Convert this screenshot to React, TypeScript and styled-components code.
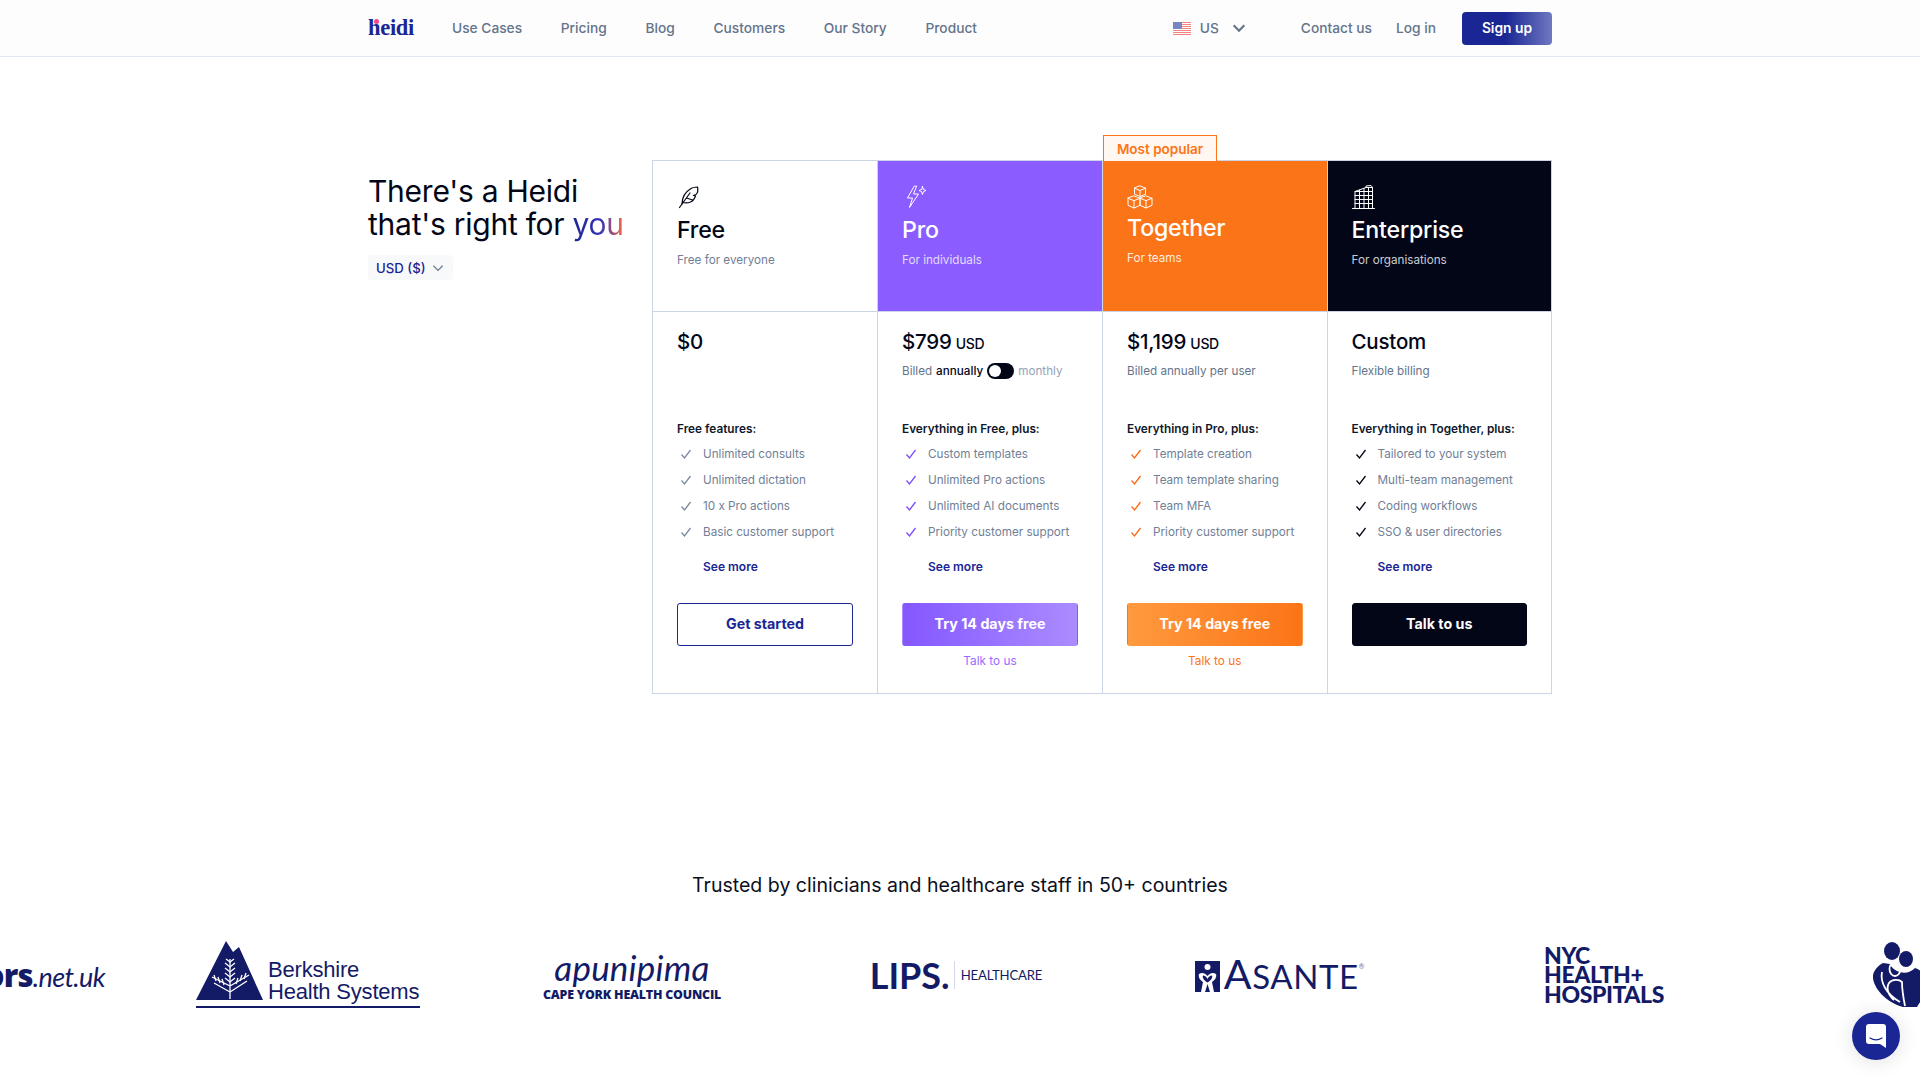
import React from "react";
import styled, { createGlobalStyle } from "styled-components";

const NAVY = "#1a2694";
const LOGO = "#141b66";

const Global = createGlobalStyle`
  html, body { margin: 0; padding: 0; background: #fff; overflow-x: hidden; }
  body { font-family: Inter, "Liberation Sans", sans-serif; color: #020617; }
  * { box-sizing: border-box; }
`;

const TopBar = styled.header`
  height: 57px;
  background: #fdfdfe;
  border-bottom: 1px solid #e2e8f0;
`;
const BarInner = styled.div`
  width: 1184px;
  height: 56px;
  margin: 0 auto;
  display: flex;
  align-items: center;
`;
const Brand = styled.div`
  position: relative;
  width: 44px;
  font: 700 22.5px/24px "Liberation Serif", serif;
  color: ${NAVY};
  letter-spacing: -0.3px;
  margin-right: 40px;
`;
const BrandDot = styled.span`
  position: absolute;
  left: 6px;
  top: 3px;
  width: 5px;
  height: 5px;
  border-radius: 50%;
  background: #f6478f;
`;
const NavLinks = styled.nav`
  display: flex;
  gap: 38.7px;
`;
const NavLink = styled.a`
  font-size: 13.75px;
  font-weight: 500;
  color: #64748b;
  white-space: nowrap;
`;
const Region = styled.div`
  margin-left: auto;
  display: flex;
  align-items: center;
  font-size: 13.75px;
  font-weight: 500;
  color: #64748b;
`;
const RegionText = styled.span`
  margin: 0 12px 0 9px;
`;
const RightLinks = styled.div`
  display: flex;
  align-items: center;
  gap: 24px;
  margin-left: 54px;
`;
const SignUp = styled.button`
  width: 90px;
  height: 33px;
  margin-left: 2px;
  border: 0;
  border-radius: 4px;
  background: linear-gradient(90deg, ${NAVY} 48%, #6e78c2 100%);
  color: #fff;
  font: 600 13.8px Inter, sans-serif;
`;

const Pricing = styled.section`
  width: 1184px;
  margin: 103px auto 0;
  display: flex;
`;
const Intro = styled.div`
  width: 284px;
  padding-top: 15px;
`;
const Headline = styled.h1`
  margin: 0;
  font-size: 30px;
  line-height: 33px;
  font-weight: 400;
  letter-spacing: -0.25px;
`;
const Shine = styled.span`
  background: linear-gradient(90deg, ${NAVY} 0%, #3a35b5 55%, #ff6a3d 100%);
  -webkit-background-clip: text;
  background-clip: text;
  color: transparent;
`;
const Currency = styled.div`
  display: inline-flex;
  align-items: center;
  gap: 5px;
  height: 25px;
  margin-top: 14px;
  padding: 0 8px;
  border-radius: 4px;
  background: #f8f9fb;
  font-size: 13.2px;
  font-weight: 500;
  color: ${NAVY};
`;
const Table = styled.div`
  width: 900px;
  display: grid;
  grid-template-columns: 225px 225px 224.5px 225.5px;
`;
const Plan = styled.article<{ $last?: boolean }>`
  position: relative;
  height: 534px;
  display: flex;
  flex-direction: column;
  border-left: 1px solid #cbd5e6;
  border-right: ${(p) => (p.$last ? "1px solid #cbd5e6" : "0")};
  border-bottom: 1px solid #cbd5e6;
`;
const Popular = styled.div`
  position: absolute;
  left: 0;
  top: -25px;
  width: 114px;
  height: 26px;
  display: flex;
  align-items: center;
  justify-content: center;
  border: 1px solid #fb7417;
  border-bottom: 0;
  background: #fff7f0;
  font-size: 13.5px;
  font-weight: 600;
  color: #fb7417;
`;
const PlanHead = styled.div<{ $bg: string; $fg: string }>`
  height: 152px;
  padding: 24px 24px 0;
  background: ${(p) => p.$bg};
  color: ${(p) => p.$fg};
  border-top: 1px solid #cbd5e6;
  border-bottom: 1px solid #cbd5e6;
`;
const PlanIcon = styled.svg`
  display: block;
  height: 24px;
  width: 26px;
  fill: none;
  stroke: currentColor;
  stroke-width: 1;
  stroke-linejoin: round;
  stroke-linecap: round;
`;
const PlanName = styled.h2<{ $tight?: boolean }>`
  margin: ${(p) => (p.$tight ? "5px" : "7px")} 0 0;
  font-size: 23.2px;
  line-height: 28px;
  font-weight: 500;
  letter-spacing: -0.2px;
`;
const PlanSub = styled.p<{ $tone: string }>`
  margin: 8px 0 0;
  font-size: 11.7px;
  line-height: 16px;
  color: ${(p) => p.$tone};
`;
const PlanBody = styled.div`
  flex: 1;
  padding: 18px 24px 0;
`;
const PriceBlock = styled.div`
  height: 91px;
`;
const Price = styled.div`
  height: 24px;
  font-size: 20.5px;
  line-height: 24px;
  font-weight: 500;
  letter-spacing: -0.2px;
`;
const PriceUnit = styled.span`
  margin-left: 4px;
  font-size: 14px;
  line-height: 1;
  letter-spacing: -0.3px;
`;
const Billing = styled.div`
  display: flex;
  align-items: center;
  height: 16px;
  margin-top: 9px;
  font-size: 11.7px;
  line-height: 16px;
  color: #64748b;
  white-space: nowrap;
`;
const Strong = styled.span`
  margin-left: 4px;
  font-weight: 500;
  color: #020617;
`;
const Muted = styled.span`
  margin-left: 4px;
  color: #94a3b8;
`;
const Toggle = styled.span`
  position: relative;
  display: inline-block;
  width: 27px;
  height: 16px;
  margin-left: 4px;
  border-radius: 8px;
  background: #020617;
`;
const Knob = styled.span`
  position: absolute;
  left: 2px;
  top: 2px;
  width: 12px;
  height: 12px;
  border-radius: 50%;
  background: #fff;
`;
const FeatureTitle = styled.div`
  height: 16px;
  font-size: 11.8px;
  line-height: 16px;
  font-weight: 600;
  color: #0f172a;
  white-space: nowrap;
`;
const FeatureList = styled.ul`
  list-style: none;
  margin: 4px 0 0;
  padding: 0;
`;
const Feature = styled.li`
  display: flex;
  align-items: center;
  height: 26px;
  padding-left: 3px;
  font-size: 11.7px;
  color: #718096;
  white-space: nowrap;
`;
const Check = styled.svg<{ $color: string }>`
  flex: none;
  width: 12px;
  height: 12px;
  margin-right: 11px;
  fill: none;
  stroke: ${(p) => p.$color};
  stroke-width: 1.3;
`;
const SeeMore = styled.a`
  display: block;
  height: 16px;
  margin: 14px 0 0 26px;
  font-size: 12px;
  line-height: 16px;
  font-weight: 600;
  color: ${NAVY};
`;
const Cta = styled.button<{ $bg: string; $fg: string; $line: string }>`
  display: block;
  width: 100%;
  height: 43px;
  margin-top: 28px;
  padding: 0 0 2px;
  border: 1px solid ${(p) => p.$line};
  border-radius: 3px;
  background: ${(p) => p.$bg};
  color: ${(p) => p.$fg};
  font: 700 14.25px Inter, sans-serif;
`;
const TalkLink = styled.a<{ $color: string }>`
  display: block;
  margin-top: 7px;
  font-size: 11.8px;
  line-height: 16px;
  text-align: center;
  color: ${(p) => p.$color};
`;

const Trusted = styled.h3`
  margin: 177px 0 0;
  font-size: 19.55px;
  line-height: 28px;
  font-weight: 400;
  text-align: center;
  color: #0b1020;
`;
const Marquee = styled.div`
  margin-top: 16px;
  overflow: hidden;
`;
const Track = styled.div`
  display: flex;
  margin-left: -178px;
  width: 2400px;
`;
const LogoCell = styled.div`
  flex: 0 0 324px;
  height: 120px;
  display: flex;
  align-items: center;
  justify-content: center;
  color: ${LOGO};
`;
const DoctorsCell = styled(LogoCell)`
  justify-content: flex-end;
  padding-right: 41px;
`;
const DoctorsMark = styled.div`
  font: 800 31px/1 "Open Sans", sans-serif;
  letter-spacing: -0.8px;
  white-space: nowrap;
`;
const DoctorsThin = styled.span`
  font: italic 400 27px/1 Lato, sans-serif;
  letter-spacing: -0.6px;
`;
const Berkshire = styled.div`
  width: 224px;
  padding-bottom: 5px;
  border-bottom: 2px solid ${LOGO};
  display: flex;
  align-items: flex-end;
  gap: 5px;
  transform: translateY(-1px);
`;
const BerkshireText = styled.div`
  margin-bottom: -2px;
  font: 400 22px/22px "Liberation Sans", sans-serif;
  white-space: nowrap;
  letter-spacing: -0.2px;
`;
const Apunipima = styled.div`
  text-align: center;
`;
const ApuScript = styled.div`
  padding-bottom: 3px;
  font: italic 400 35px/36px Lato, sans-serif;
  letter-spacing: 0.2px;
`;
const ApuSub = styled.div`
  font: 800 12.4px/14px "Open Sans", sans-serif;
  white-space: nowrap;
  letter-spacing: -0.2px;
`;
const Lips = styled.div`
  display: flex;
  align-items: center;
`;
const LipsWord = styled.span`
  font: 700 36px/1 Lato, sans-serif;
`;
const LipsSide = styled.span`
  margin-left: 4px;
  padding-left: 6px;
  border-left: 1px solid #d5d8e8;
  font: 400 13.2px/28px Lato, sans-serif;
  letter-spacing: -0.2px;
`;
const Asante = styled.div`
  display: flex;
  align-items: flex-end;
  gap: 4px;
`;
const AsanteWord = styled.span`
  font: 400 41px/32px Lato, sans-serif;
  letter-spacing: 0.6px;
`;
const AsanteSmall = styled.span`
  font-size: 33px;
`;
const Registered = styled.sup`
  font-size: 7px;
  vertical-align: 20px;
  line-height: 0;
  opacity: 0.7;
`;
const Nyc = styled.div`
  font: 900 23px/19.5px Lato, sans-serif;
  letter-spacing: -0.4px;
  white-space: nowrap;
`;
const Chat = styled.div`
  position: fixed;
  right: 20px;
  bottom: 20px;
  width: 48px;
  height: 48px;
  border-radius: 50%;
  background: ${NAVY};
  display: flex;
  align-items: center;
  justify-content: center;
  box-shadow: 0 2px 20px rgba(0, 0, 0, 0.12);
`;

const Chevron = ({ size, color, w = 1.5 }: { size: number; color: string; w?: number }) => (
  <svg width={size} height={size} viewBox="0 0 12 12" fill="none" stroke={color} strokeWidth={w}>
    <path d="M2 4l4 4 4-4" />
  </svg>
);

const Flag = () => (
  <svg width="18" height="13" viewBox="0 0 18 13" opacity="0.62">
    <rect width="18" height="13" fill="#fff" />
    {[0, 2, 4, 6, 8, 10, 12].map((y) => (
      <rect key={y} y={y} width="18" height="1" fill="#ee3b3b" />
    ))}
    <rect width="9" height="7" fill="#2a3f9e" />
  </svg>
);

const FeatherIcon = () => (
  <PlanIcon viewBox="0 0 26 24" style={{ strokeWidth: 1.2 }}>
    <path d="M5 19C5 13 6.500 8 14 3.500c2-1.200 4-1.500 6.500-1.500.7 3 .2 6-1.500 7.500L16.500 10.500l2 .5c-1 3-2.500 5-5 6s-5.500 1-7.500.5" />
    <path d="M2.500 22.500L13 8M9.500 13l6 2" />
  </PlanIcon>
);
const BoltIcon = () => (
  <PlanIcon viewBox="0 0 26 24">
    <path d="M12 1.500L5.500 13h5l-3 9.500L16.500 9h-5l3-7.500z" />
    <path d="M20.500 1.500l1 3 2.500 1-2.500 1-1 3-1-3-2.500-1 2.500-1z" />
  </PlanIcon>
);
const BlocksIcon = () => (
  <PlanIcon viewBox="0 0 26 24">
    <path d="M13 1l5.500 2.200v6L13 11.500 7.500 9.200v-6zM7.500 3.200L13 5.500l5.500-2.300M13 5.500v6" />
    <path d="M7 11l6 2.300v7L7 23l-6-2.700v-7zM1 13.300L7 15.600l6-2.300M7 15.600V23" />
    <path d="M19 11l6 2.300v7L19 23l-6-2.700v-7zM13 13.300l6 2.300 6-2.300M19 15.600V23" />
  </PlanIcon>
);
const TowerIcon = () => (
  <PlanIcon viewBox="0 0 26 24">
    <path d="M3 23V6.500L14 2.500h6.500V23M0.500 23.500h22" />
    <path d="M3 10.500h17.500M3 14.500h17.500M3 18.500h17.500M3 6.500h17.500M7.500 5v18M12 3.500V23M16.500 2.500v20.500M14 2.500V1l5-.5 1.500 2" />
  </PlanIcon>
);

const TickIcon = ({ color }: { color: string }) => (
  <Check $color={color} viewBox="0 0 12 12">
    <path d="M1.500 6.500L4.500 10 10.500 2" />
  </Check>
);

const plans = [
  {
    name: "Free", sub: "Free for everyone", icon: <FeatherIcon />, bg: "#fff", fg: "#020617", tone: "#718096",
    price: "$0", title: "Free features:", check: "#7c8aa0",
    items: ["Unlimited consults", "Unlimited dictation", "10 x Pro actions", "Basic customer support"],
    cta: "Get started", ctaBg: "#fff", ctaFg: NAVY, ctaLine: NAVY,
  },
  {
    name: "Pro", sub: "For individuals", icon: <BoltIcon />, bg: "#8b5cff", fg: "#fff", tone: "rgba(255,255,255,.78)",
    price: "$799", unit: "USD", title: "Everything in Free, plus:", check: "#7c4dff", toggle: true,
    items: ["Custom templates", "Unlimited Pro actions", "Unlimited AI documents", "Priority customer support"],
    cta: "Try 14 days free", ctaBg: "linear-gradient(90deg,#8457ff,#ab8cff)", ctaFg: "#fff", ctaLine: "transparent", talk: "#9a6bff",
  },
  {
    name: "Together", sub: "For teams", icon: <BlocksIcon />, bg: "#fb7417", fg: "#fff", tone: "rgba(255,255,255,.88)", tight: true,
    price: "$1,199", unit: "USD", billing: "Billed annually per user", title: "Everything in Pro, plus:", check: "#fb6a17", popular: true,
    items: ["Template creation", "Team template sharing", "Team MFA", "Priority customer support"],
    cta: "Try 14 days free", ctaBg: "linear-gradient(90deg,#ff9a3e,#fb7417)", ctaFg: "#fff", ctaLine: "transparent", talk: "#fb7417",
  },
  {
    name: "Enterprise", sub: "For organisations", icon: <TowerIcon />, bg: "#030617", fg: "#fff", tone: "rgba(255,255,255,.8)",
    price: "Custom", billing: "Flexible billing", title: "Everything in Together, plus:", check: "#020617", last: true,
    items: ["Tailored to your system", "Multi-team management", "Coding workflows", "SSO & user directories"],
    cta: "Talk to us", ctaBg: "#030617", ctaFg: "#fff", ctaLine: "#030617",
  },
];

const PineLogo = () => (
  <svg width="67" height="60" viewBox="0 0 67 60">
    <path d="M0 59L30 0l7 11 6-5 24 53z" fill={LOGO} />
    <g stroke="#fff" fill="none" strokeWidth="1.300">
      <path d="M34 58V18M34 45L16 36M34 45l19-11M34 51L18 42M34 51l17-11" />
      <path d="M29 22l5 4 5-4M29 27l5 4 5-4M29 32l5 4 5-4M29 37l5 4 5-4M30 18l4 3 4-3" />
      <path d="M18 34l2 6M22 36l2 6M26 38l2 6M50 32l-2 6M46 34l-2 6M42 37l-2 6" />
    </g>
  </svg>
);

const AsanteIcon = () => (
  <svg width="25" height="31" viewBox="0 0 25 31">
    <rect width="25" height="31" fill={LOGO} />
    <circle cx="12.500" cy="6" r="3" fill="#fff" />
    <path d="M4 13c3-2 6-1 8.500 2C15 12 18 11 21 13c1 3-1 6-4 8l2 10h-4l-2.500-8L10 31H6l2-10c-3-2-5-5-4-8z" fill="#fff" />
    <path d="M8 14.500c2 0 3.500 1.500 4.500 3.500 1-2 2.500-3.500 4.500-3.500 1 2-1 5-4.500 7-3.500-2-5.500-5-4.500-7z" fill={LOGO} />
  </svg>
);

const FamilyLogo = () => (
  <svg width="110" height="66" viewBox="0 0 110 66" fill={LOGO}>
    <ellipse cx="19" cy="9" rx="8" ry="9" />
    <ellipse cx="33" cy="17" rx="7" ry="8" />
    <path d="M10 21c-6 3-11 10-10 15 1 10 12 24 30 29h14c5-8 10-14 10-22 0-8-5-15-12-17-4 4-10 6-15 4-5-1-9-5-10-8z" />
    <g fill="none" stroke="#fff" strokeWidth="1.800">
      <ellipse cx="22" cy="27" rx="5.500" ry="7" />
      <path d="M9 30c-2 10 4 22 18 30M32 64c-2-10-3-18-3-24-3-3-10-3-13 1-3 5-1 12 5 17" />
    </g>
  </svg>
);

const ChatGlyph = () => (
  <svg width="20" height="24" viewBox="0 0 20 24">
    <path d="M3 0h14a3 3 0 013 3v21l-6-4H3a3 3 0 01-3-3V3a3 3 0 013-3z" fill="#fff" />
    <path d="M4 14c4 2.500 8 2.500 12 0" fill="none" stroke={NAVY} strokeWidth="1.300" strokeLinecap="round" />
  </svg>
);

export default function App() {
  return (
    <>
      <Global />
      <TopBar>
        <BarInner>
          <Brand>
            heidi
            <BrandDot />
          </Brand>
          <NavLinks>
            {["Use Cases", "Pricing", "Blog", "Customers", "Our Story", "Product"].map((l) => (
              <NavLink key={l}>{l}</NavLink>
            ))}
          </NavLinks>
          <Region>
            <Flag />
            <RegionText>US</RegionText>
            <Chevron size={16} color="#64748b" w={1.6} />
          </Region>
          <RightLinks>
            <NavLink>Contact us</NavLink>
            <NavLink>Log in</NavLink>
            <SignUp>Sign up</SignUp>
          </RightLinks>
        </BarInner>
      </TopBar>

      <Pricing>
        <Intro>
          <Headline>
            There's a Heidi
            <br />
            that's right for <Shine>you</Shine>
          </Headline>
          <Currency>
            USD ($)
            <Chevron size={14} color="#64748b" w={1.1} />
          </Currency>
        </Intro>
        <Table>
          {plans.map((p) => (
            <Plan key={p.name} $last={p.last}>
              {p.popular && <Popular>Most popular</Popular>}
              <PlanHead $bg={p.bg} $fg={p.fg}>
                {p.icon}
                <PlanName $tight={p.tight}>{p.name}</PlanName>
                <PlanSub $tone={p.tone}>{p.sub}</PlanSub>
              </PlanHead>
              <PlanBody>
                <PriceBlock>
                  <Price>
                    {p.price}
                    {p.unit && <PriceUnit>{p.unit}</PriceUnit>}
                  </Price>
                  {p.toggle && (
                    <Billing>
                      Billed<Strong>annually</Strong>
                      <Toggle>
                        <Knob />
                      </Toggle>
                      <Muted>monthly</Muted>
                    </Billing>
                  )}
                  {p.billing && <Billing>{p.billing}</Billing>}
                </PriceBlock>
                <FeatureTitle>{p.title}</FeatureTitle>
                <FeatureList>
                  {p.items.map((i) => (
                    <Feature key={i}>
                      <TickIcon color={p.check} />
                      {i}
                    </Feature>
                  ))}
                </FeatureList>
                <SeeMore>See more</SeeMore>
                <Cta $bg={p.ctaBg} $fg={p.ctaFg} $line={p.ctaLine}>
                  {p.cta}
                </Cta>
                {p.talk && <TalkLink $color={p.talk}>Talk to us</TalkLink>}
              </PlanBody>
            </Plan>
          ))}
        </Table>
      </Pricing>

      <Trusted>Trusted by clinicians and healthcare staff in 50+ countries</Trusted>
      <Marquee>
        <Track>
          <DoctorsCell>
            <DoctorsMark>
              doctors<DoctorsThin>.net.uk</DoctorsThin>
            </DoctorsMark>
          </DoctorsCell>
          <LogoCell>
            <Berkshire>
              <PineLogo />
              <BerkshireText>
                Berkshire
                <br />
                Health Systems
              </BerkshireText>
            </Berkshire>
          </LogoCell>
          <LogoCell>
            <Apunipima>
              <ApuScript>apunipima</ApuScript>
              <ApuSub>CAPE YORK HEALTH COUNCIL</ApuSub>
            </Apunipima>
          </LogoCell>
          <LogoCell>
            <Lips>
              <LipsWord>LIPS.</LipsWord>
              <LipsSide>HEALTHCARE</LipsSide>
            </Lips>
          </LogoCell>
          <LogoCell>
            <Asante>
              <AsanteIcon />
              <AsanteWord>
                A<AsanteSmall>SANTE</AsanteSmall>
                <Registered>®</Registered>
              </AsanteWord>
            </Asante>
          </LogoCell>
          <LogoCell>
            <Nyc>
              NYC
              <br />
              HEALTH+
              <br />
              HOSPITALS
            </Nyc>
          </LogoCell>
          <LogoCell>
            <FamilyLogo />
          </LogoCell>
        </Track>
      </Marquee>
      <Chat>
        <ChatGlyph />
      </Chat>
    </>
  );
}
